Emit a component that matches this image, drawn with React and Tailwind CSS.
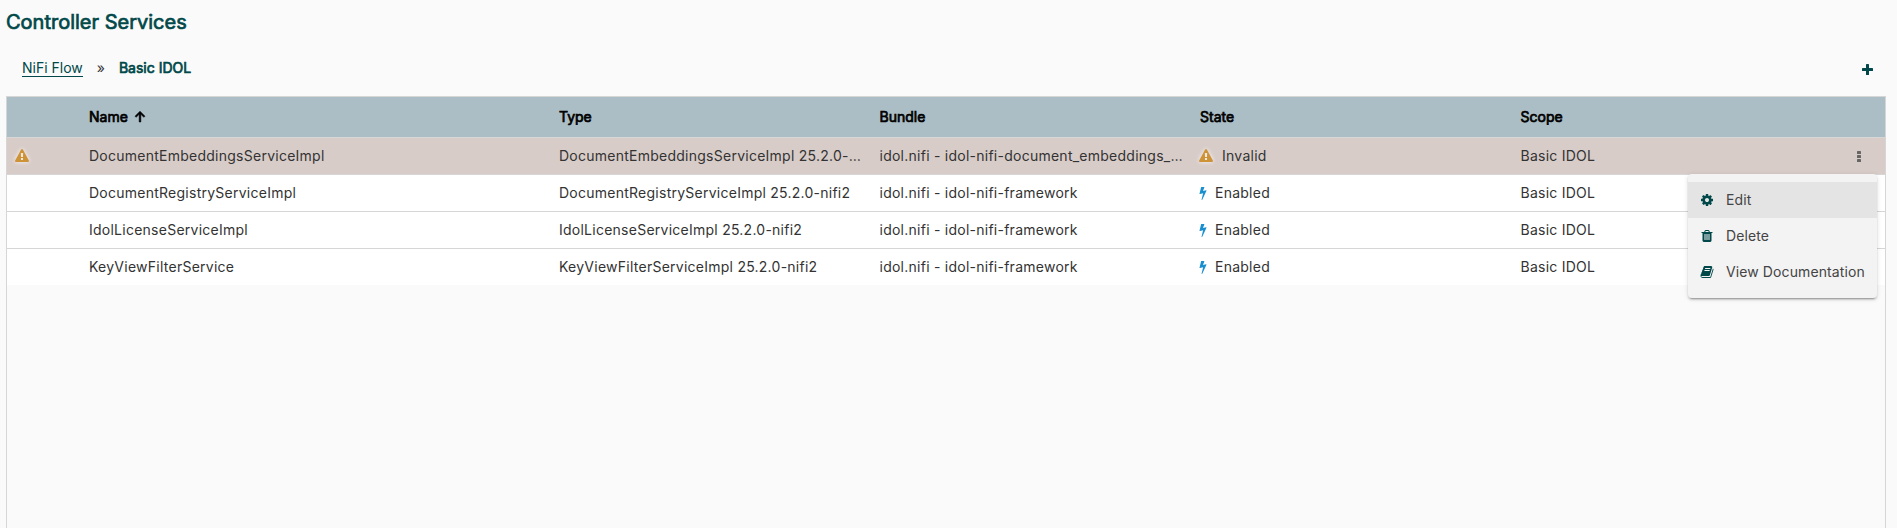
import React from "react";

const PATHS = {
  warning:
    "M1024 1375v-190q0-14-9.5-23.5t-22.5-9.5h-192q-13 0-22.5 9.5t-9.5 23.5v190q0 14 9.5 23.5t22.5 9.5h192q13 0 22.5-9.5t9.5-23.5zm-2-374l18-459q0-12-10-19-13-11-24-11h-220q-11 0-24 11-10 7-10 21l17 457q0 10 10 16.5t24 6.5h185q14 0 23.5-6.5t10.5-16.5zm-14-934l768 1408q35 63-2 126-17 29-46.5 46t-63.5 17h-1536q-34 0-63.5-17t-46.5-46q-37-63-2-126l768-1408q17-31 47-49t65-18 65 18 47 49z",
  bolt: "M1333 566q18 20 7 44l-540 1157q-13 25-42 25-4 0-14-2-17-5-25.5-19t-4.5-30l197-808-406 101q-4 1-12 1-18 0-31-11-18-15-13-39l201-825q4-14 16-23t28-9h328q19 0 32 12.5t13 29.5q0 8-5 18l-171 463 396-98q8-2 12-2 19 0 34 15z",
  cog: "M1152 896q0-106-75-181t-181-75-181 75-75 181 75 181 181 75 181-75 75-181zm512-109v222q0 12-8 23t-20 13l-185 28q-19 54-39 91 35 50 107 138 10 12 10 25t-9 23q-27 37-99 108t-94 71q-12 0-26-9l-138-108q-44 23-91 38-16 136-29 186-7 28-36 28h-222q-14 0-24.5-8.5t-11.5-21.5l-28-184q-49-16-90-37l-141 107q-10 9-25 9-14 0-25-11-126-114-165-168-7-10-7-23 0-12 8-23 15-21 51-66.5t54-70.5q-27-50-41-99l-183-27q-13-2-21-12.5t-8-23.5v-222q0-12 8-23t19-13l186-28q14-46 39-92-40-57-107-138-10-12-10-24 0-10 9-23 26-36 98.5-107.5t94.5-71.5q13 0 26 10l138 107q44-23 91-38 16-136 29-186 7-28 36-28h222q14 0 24.5 8.5t11.5 21.5l28 184q49 16 90 37l142-107q9-9 24-9 13 0 25 10 129 119 165 170 7 8 7 22 0 12-8 23-15 21-51 66.5t-54 70.5q26 50 41 98l183 28q13 2 21 12.5t8 23.5z",
  trash:
    "M704 1376v-704q0-14-9-23t-23-9h-64q-14 0-23 9t-9 23v704q0 14 9 23t23 9h64q14 0 23-9t9-23zm256 0v-704q0-14-9-23t-23-9h-64q-14 0-23 9t-9 23v704q0 14 9 23t23 9h64q14 0 23-9t9-23zm256 0v-704q0-14-9-23t-23-9h-64q-14 0-23 9t-9 23v704q0 14 9 23t23 9h64q14 0 23-9t9-23zm-544-992h448l-48-117q-7-9-17-11h-317q-10 2-17 11zm928 32v64q0 14-9 23t-23 9h-96v948q0 83-47 143.5t-113 60.5h-832q-66 0-113-58.5t-47-141.5v-952h-96q-14 0-23-9t-9-23v-64q0-14 9-23t23-9h309l70-167q15-37 54-63t79-26h320q40 0 79 26t54 63l70 167h309q14 0 23 9t9 23z",
  book: "M1703 478q40 57 18 129l-275 906q-19 64-76.5 107.5t-122.5 43.5h-923q-77 0-148.5-53.5t-99.5-131.5q-24-67-2-127 0-4 3-27t4-37q1-8-3-21.5t-3-19.5q2-11 8-21t16.5-23.5 16.5-23.5q23-38 45-91.5t30-91.5q3-10 .5-30t-.5-28q3-11 17-28t17-23q21-36 42-92t25-90q1-9-2.5-32t.5-28q4-13 22-30.5t22-22.5q19-26 42.5-84.5t27.5-96.5q1-8-3-25.5t-2-26.5q2-8 9-18t18-23 17-21q8-12 16.5-30.5t15-35 16-36 19.5-32 26.5-23.5 36-11.5 47.5 5.5l-1 3q38-9 51-9h761q74 0 114 56t18 130l-274 906q-36 119-71.5 153.5t-128.5 34.5h-869q-27 0-38 15-11 16-1 43 24 70 144 70h923q29 0 56-15.5t35-41.5l300-987q7-22 5-57 38 15 59 43zm-1064 2q-4 13 2 22.5t20 9.5h608q13 0 25.5-9.5t16.5-22.5l21-64q4-13-2-22.5t-20-9.5h-608q-13 0-25.5 9.5t-16.5 22.5zm-83 256q-4 13 2 22.5t20 9.5h608q13 0 25.5-9.5t16.5-22.5l21-64q4-13-2-22.5t-20-9.5h-608q-13 0-25.5 9.5t-16.5 22.5z",
};

function Icon({ name, className = "" }) {
  return (
    <svg viewBox="0 0 1792 1792" fill="currentColor" className={`size-3.5 shrink-0 overflow-visible ${className}`}>
      <path d={PATHS[name]} />
    </svg>
  );
}

const ROWS = [
  ["DocumentEmbeddingsServiceImpl", "DocumentEmbeddingsServiceImpl 25.2.0-nifi2", "idol.nifi - idol-nifi-document_embeddings_service", false],
  ["DocumentRegistryServiceImpl", "DocumentRegistryServiceImpl 25.2.0-nifi2", "idol.nifi - idol-nifi-framework", true],
  ["IdolLicenseServiceImpl", "IdolLicenseServiceImpl 25.2.0-nifi2", "idol.nifi - idol-nifi-framework", true],
  ["KeyViewFilterService", "KeyViewFilterServiceImpl 25.2.0-nifi2", "idol.nifi - idol-nifi-framework", true],
];

const GRID = "grid grid-cols-[82px_470px_320.5px_320.5px_320.5px_1fr]";
const BOLD = "[-webkit-text-stroke:0.7px_currentColor]";
const WARN = "text-[#cf9337] drop-shadow-[0_0_2px_rgba(255,255,255,0.9)]";

function Row({ row, last }) {
  const [name, type, bundle, enabled] = row;
  return (
    <div
      className={`${GRID} items-center text-[#333333] ${last ? "h-9" : "h-[37px] border-b border-[#d6d6d6]"} ${enabled ? "bg-white" : "bg-[#d8ccc8]"}`}
    >
      <div className="pl-2">{!enabled && <Icon name="warning" className={WARN} />}</div>
      <div>{name}</div>
      <div className="truncate pr-4">{type}</div>
      <div className="truncate pr-4">{bundle}</div>
      <div className="flex items-center">
        {enabled ? (
          <>
            <span className="-ml-px flex w-2 justify-center">
              <Icon name="bolt" className="text-[#1a8fcf]" />
            </span>
            <span className="ml-2">Enabled</span>
          </>
        ) : (
          <>
            <Icon name="warning" className={`-ml-px ${WARN}`} />
            <span className="ml-[9px]">Invalid</span>
          </>
        )}
      </div>
      <div className="flex items-center justify-between pr-6">
        <span>Basic IDOL</span>
        {!enabled && (
          <svg viewBox="0 0 4 11" className="h-[11px] w-1" fill="#666666">
            <rect width="4" height="3" rx="0.6" />
            <rect y="4" width="4" height="3" rx="0.6" />
            <rect y="8" width="4" height="3" rx="0.6" />
          </svg>
        )}
      </div>
    </div>
  );
}

function MenuItem({ icon, label, active }) {
  return (
    <div className={`flex h-9 items-center pl-3 ${active ? "bg-[#e4e4e4]" : ""}`}>
      <Icon name={icon} className="text-[#004849]" />
      <span className="ml-3">{label}</span>
    </div>
  );
}

export default function App() {
  return (
    <div className="relative flex h-[528px] flex-col overflow-hidden bg-[#fafafa] pr-[11px] pl-1.5 font-['Inter',sans-serif] text-sm leading-5 tracking-[0.25px]">
      <h1 className={`mt-2 h-7 text-xl leading-7 tracking-normal text-[#004849] ${BOLD}`}>Controller Services</h1>
      <div className="flex h-[60px] items-center justify-between pt-[3px] pr-[13px] pl-4 tracking-normal">
        <div className="flex items-center text-[#004849]">
          <span className="border-b border-[#004849] leading-[17px]">NiFi Flow</span>
          <span className="mx-3.5 text-[#333333]">»</span>
          <span className={BOLD}>Basic IDOL</span>
        </div>
        <svg viewBox="0 0 11 11" className="mt-1 size-[11px]" fill="#004849">
          <rect x="4" width="3" height="11" rx="0.6" />
          <rect y="4" width="11" height="3" rx="0.6" />
        </svg>
      </div>
      <div className="flex-1 border-x border-t border-[#d6d6d6]">
        <div className={`${GRID} h-[41px] items-center border-b border-[#d6d6d6] bg-[#abbdc5] tracking-normal text-black ${BOLD}`}>
          <div />
          <div className="flex items-center">
            Name
            <svg viewBox="0 -960 960 960" className="ml-0.5 size-5" fill="currentColor" stroke="currentColor" strokeWidth="24">
              <path d="M440-240v-368L296-464l-56-56 240-240 240 240-56 56-144-144v368h-80Z" />
            </svg>
          </div>
          <div>Type</div>
          <div>Bundle</div>
          <div>State</div>
          <div>Scope</div>
        </div>
        {ROWS.map((row, i) => (
          <Row key={row[0]} row={row} last={i === ROWS.length - 1} />
        ))}
      </div>
      <div className="absolute top-[174px] left-[1688px] h-[124px] w-[189px] rounded bg-[#f3f3f3] py-2 tracking-[0.1px] text-[#444444] shadow-[0_3px_1px_-2px_rgba(0,0,0,0.2),0_2px_2px_0_rgba(0,0,0,0.14),0_1px_5px_0_rgba(0,0,0,0.12)]">
        <MenuItem icon="cog" label="Edit" active />
        <MenuItem icon="trash" label="Delete" />
        <MenuItem icon="book" label="View Documentation" />
      </div>
    </div>
  );
}
